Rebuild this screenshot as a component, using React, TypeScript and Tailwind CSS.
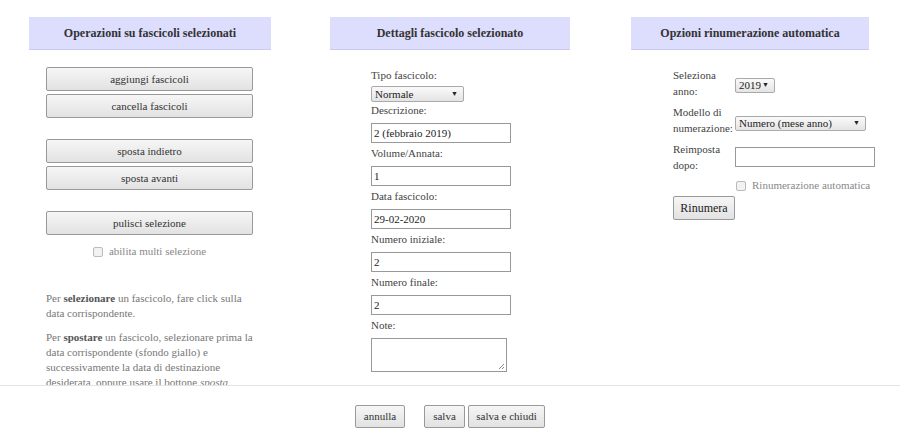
import React from 'react'

function Btn({ children, className = '' }: { children: React.ReactNode; className?: string }) {
  return (
    <div
      className={`flex items-center justify-center border border-[#999] rounded-[2px] bg-gradient-to-b from-[#f6f6f6] to-[#e2e2e2] text-[#333] text-[11px] ${className}`}
    >
      {children}
    </div>
  )
}

function Header({ title }: { title: string }) {
  return (
    <div className="h-[33px] bg-[#ddddfd] border-b border-[#c9c9f3] flex items-center justify-center font-bold text-[12px] text-[#333]">
      {title}
    </div>
  )
}

function Select({ value, className = '' }: { value: string; className?: string }) {
  return (
    <div className={`flex items-center justify-between border border-[#aaa] rounded-[2px] bg-gradient-to-b from-[#fafafa] to-[#e4e4e4] pl-[3px] text-[11px] text-[#222] ${className}`}>
      <span>{value}</span>
      <span className="text-[7px] mr-[5px]">▼</span>
    </div>
  )
}

function Input({ value = '', className = '' }: { value?: string; className?: string }) {
  return (
    <div className={`border border-[#999] bg-white px-[2px] flex items-center text-[11px] text-[#222] ${className}`}>
      {value}
    </div>
  )
}

function Check({ label }: { label: string }) {
  return (
    <div className="flex items-center gap-[6px] text-[11px] leading-[13px] text-[#888] whitespace-nowrap">
      <span className="shrink-0 w-[10px] h-[10px] border border-[#bbb] rounded-[2px] bg-[#f2f2f2]" />
      {label}
    </div>
  )
}

export default function App() {
  const fields = [
    { label: 'Descrizione:', value: '2 (febbraio 2019)' },
    { label: 'Volume/Annata:', value: '1' },
    { label: 'Data fascicolo:', value: '29-02-2020' },
    { label: 'Numero iniziale:', value: '2' },
    { label: 'Numero finale:', value: '2' },
  ]

  return (
    <div className="h-[446px] w-[900px] bg-white flex flex-col overflow-hidden font-['Liberation_Serif','Times_New_Roman',serif]">
      <div className="h-[386px] border-b border-[#e3e3e3] overflow-hidden grid grid-cols-3">
        {/* left */}
        <div className="px-[29px] pt-[17px]">
          <Header title="Operazioni su fascicoli selezionati" />
          <div className="ml-[17px] w-[207px] mt-[17px] flex flex-col">
            <Btn className="h-[24px]">aggiungi fascicoli</Btn>
            <Btn className="h-[24px] mt-[3px]">cancella fascicoli</Btn>
            <Btn className="h-[24px] mt-[21px]">sposta indietro</Btn>
            <Btn className="h-[24px] mt-[3px]">sposta avanti</Btn>
            <Btn className="h-[24px] mt-[21px]">pulisci selezione</Btn>
            <div className="mt-[10px] flex justify-center">
              <Check label="abilita multi selezione" />
            </div>
            <div className="mt-[33px] text-[11px] leading-[15px] text-[#777] w-[215px]">
              <p>
                Per <b className="text-[#555]">selezionare</b> un fascicolo, fare click sulla data corrispondente.
              </p>
              <p className="mt-[9px]">
                Per <b className="text-[#555]">spostare</b> un fascicolo, selezionare prima la data corrispondente (sfondo giallo) e
                successivamente la data di destinazione desiderata, oppure usare il bottone <i>sposta indietro</i> o{' '}
                <i>sposta avanti</i>.
              </p>
            </div>
          </div>
        </div>

        {/* middle */}
        <div className="px-[30px] pt-[17px]">
          <Header title="Dettagli fascicolo selezionato" />
          <div className="ml-[41px] mt-[18px] text-[11px] text-[#444]">
            <div className="h-[15px] leading-[15px]">Tipo fascicolo:</div>
            <Select value="Normale" className="mt-[3px] w-[93px] h-[16px]" />
            {fields.map((f, i) => (
              <div key={f.label} className={i === 0 ? 'mt-[1px]' : 'mt-[3px]'}>
                <div className="h-[15px] leading-[15px]">{f.label}</div>
                <Input value={f.value} className="mt-[5px] w-[140px] h-[20px]" />
              </div>
            ))}
            <div className="mt-[3px] h-[15px] leading-[15px]">Note:</div>
            <div className="mt-[5px] w-[136px] h-[34px] border border-[#999] bg-white relative">
              <svg className="absolute right-[1px] bottom-[1px]" width="7" height="7" viewBox="0 0 7 7">
                <path d="M6 1 L1 6 M6 4 L4 6" stroke="#888" strokeWidth="1" />
              </svg>
            </div>
          </div>
        </div>

        {/* right */}
        <div className="px-[31px] pt-[17px]">
          <Header title="Opzioni rinumerazione automatica" />
          <div className="ml-[42px] mt-[17px] text-[11px] text-[#444]">
            <div className="grid grid-cols-[62px_auto] gap-y-[5px] items-center leading-[16px]">
              <div>Seleziona<br />anno:</div>
              <Select value="2019" className="w-[40px] h-[15px] mt-[4px]" />
              <div>Modello di<br />numerazione:</div>
              <Select value="Numero (mese anno)" className="w-[131px] h-[15px] mt-[6px]" />
              <div>Reimposta<br />dopo:</div>
              <Input className="w-[140px] h-[20px]" />
            </div>
            <div className="ml-[63px] mt-[6px]">
              <Check label="Rinumerazione automatica" />
            </div>
            <Btn className="mt-[4px] w-[62px] h-[24px] !text-[#222] !text-[12px]">Rinumera</Btn>
          </div>
        </div>
      </div>

      {/* footer */}
      <div className="flex justify-center pt-[19px]">
        <Btn className="w-[50px] h-[23px]">annulla</Btn>
        <Btn className="w-[41px] h-[23px] ml-[19px]">salva</Btn>
        <Btn className="w-[77px] h-[23px] ml-[3px]">salva e chiudi</Btn>
      </div>
    </div>
  )
}
